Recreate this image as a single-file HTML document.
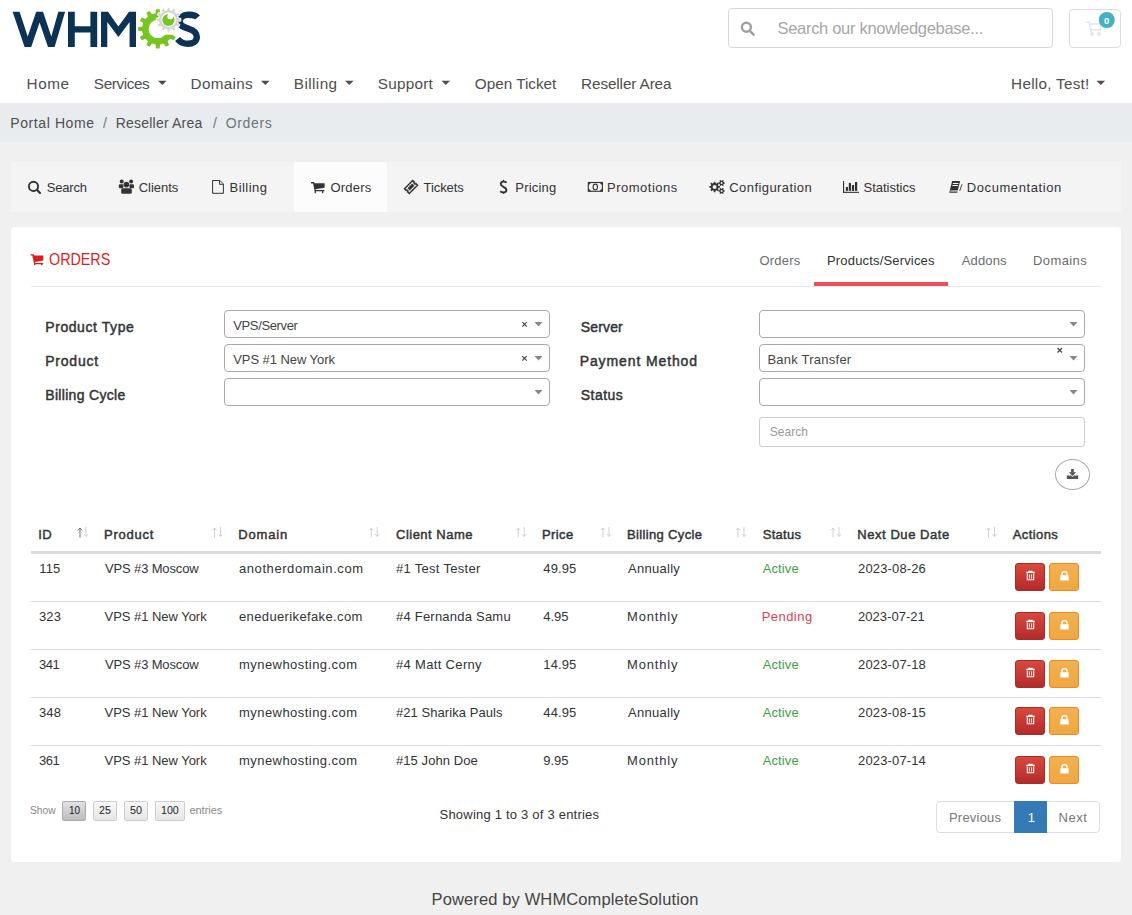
<!DOCTYPE html>
<html><head><meta charset="utf-8"><title>Orders</title>
<style>
html,body{margin:0;padding:0;}
body{width:1132px;height:915px;overflow:hidden;position:relative;background:#f0f0f0;font-family:"Liberation Sans",sans-serif;}
.b{position:absolute;box-sizing:border-box;}
.t{position:absolute;white-space:nowrap;font-family:"Liberation Sans",sans-serif;}
svg.ov{position:absolute;left:0;top:0;}
</style></head><body>
<!-- header -->
<div class="b" style="left:0;top:0;width:1132px;height:103px;background:#fff"></div>
<div class="b" style="left:0;top:103px;width:1132px;height:39px;background:#e9ecef"></div>
<div class="b" style="left:728px;top:8px;width:325px;height:40px;border:1px solid #d8d8d8;border-radius:4px;background:#fff"></div>
<div class="b" style="left:1069px;top:9px;width:52px;height:39px;border:1px solid #dcdcdc;border-radius:4px;background:#fff"></div>
<!-- tabs bar -->
<div class="b" style="left:11px;top:162px;width:1110px;height:50px;background:#f4f4f4"></div>
<div class="b" style="left:294px;top:162px;width:93px;height:50px;background:#fcfcfc"></div>
<!-- panel -->
<div class="b" style="left:11px;top:227px;width:1110px;height:635px;background:#fff;border-radius:4px"></div>
<div class="b" style="left:31px;top:286px;width:1070px;height:1px;background:#e8e8e8"></div>
<div class="b" style="left:814px;top:282px;width:134px;height:4px;background:#ee4e5a"></div>
<!-- selects -->
<div class="b" style="left:224px;top:310px;width:326px;height:28px;border:1px solid #aaa;border-radius:4px"></div>
<div class="b" style="left:224px;top:344px;width:326px;height:28px;border:1px solid #aaa;border-radius:4px"></div>
<div class="b" style="left:224px;top:378px;width:326px;height:28px;border:1px solid #aaa;border-radius:4px"></div>
<div class="b" style="left:759px;top:310px;width:326px;height:28px;border:1px solid #aaa;border-radius:4px"></div>
<div class="b" style="left:759px;top:344px;width:326px;height:28px;border:1px solid #aaa;border-radius:4px"></div>
<div class="b" style="left:759px;top:378px;width:326px;height:28px;border:1px solid #aaa;border-radius:4px"></div>
<div class="b" style="left:759px;top:417px;width:326px;height:30px;border:1px solid #ccc;border-radius:3px"></div>
<div class="b" style="left:1055px;top:459px;width:35px;height:31px;border:1px solid #a8a8a8;border-radius:50%"></div>
<!-- table -->
<div class="b" style="left:31px;top:551px;width:1070px;height:3px;background:#dcdcdc"></div>
<div class="b" style="left:31px;top:601px;width:1070px;height:1px;background:#ddd"></div>
<div class="b" style="left:31px;top:649px;width:1070px;height:1px;background:#ddd"></div>
<div class="b" style="left:31px;top:697px;width:1070px;height:1px;background:#ddd"></div>
<div class="b" style="left:31px;top:745px;width:1070px;height:1px;background:#ddd"></div>
<!-- action buttons -->
<div class="b btnd" style="left:1015px;top:563px"></div><div class="b btnl" style="left:1049px;top:563px"></div>
<div class="b btnd" style="left:1015px;top:612px"></div><div class="b btnl" style="left:1049px;top:612px"></div>
<div class="b btnd" style="left:1015px;top:660px"></div><div class="b btnl" style="left:1049px;top:660px"></div>
<div class="b btnd" style="left:1015px;top:707px"></div><div class="b btnl" style="left:1049px;top:707px"></div>
<div class="b btnd" style="left:1015px;top:756px"></div><div class="b btnl" style="left:1049px;top:756px"></div>
<style>
.btnd{width:30px;height:28px;border:1px solid #a82a2a;border-radius:3px;background:linear-gradient(#d9493c,#b22b2b);}
.btnl{width:30px;height:28px;border:1px solid #ec8a1c;border-radius:3px;background:linear-gradient(#f3b054,#efa73f);}
.pg{width:24px;height:20px;border:1px solid #ccc;border-radius:2px;background:linear-gradient(#f8f8f8,#e6e6e6);}
</style>
<!-- length buttons -->
<div class="b pg" style="left:62px;top:801px;border-color:#aaa;background:linear-gradient(#e2e2e2,#bdbdbd)"></div>
<div class="b pg" style="left:93px;top:801px"></div>
<div class="b pg" style="left:124px;top:801px"></div>
<div class="b pg" style="left:155px;top:801px;width:30px"></div>
<!-- pagination -->
<div class="b" style="left:936px;top:801px;width:164px;height:32px;border:1px solid #ddd;border-radius:4px"></div>
<div class="b" style="left:1014px;top:801px;width:33px;height:32px;background:#337ab7"></div>
<svg class="ov" width="1132" height="915" viewBox="0 0 1132 915">
<!-- logo -->
<g fill="#0d3354">
<path d="M12.6,11.7 L19.6,11.7 L27.7,36.5 L36.2,11.7 L43,11.7 L51.3,36.5 L58.3,11.7 L65.1,11.7 L54.6,47 L48,47 L39.6,22.5 L31.2,47 L24.6,47 Z"/>
<path d="M68,11.7 H74.8 V26.2 H90.4 V11.7 H97.2 V47 H90.4 V32.6 H74.8 V47 H68 Z"/>
<path d="M101,11.7 H108 L118.4,26.5 L129,11.7 H136 V47 H129.6 V22 L118.4,37 L107.3,22 V47 H101 Z"/>
</g>
<path d="M197.5,17.5 C195,14.5 191.5,14.8 188,14.8 C183,14.8 179.7,17.5 179.7,21.5 C179.7,26 184,27.3 188.5,28.7 C193,30 196.8,31.8 196.8,37 C196.8,41.5 192.5,43.8 188,43.8 C183.5,43.8 180,42 177.5,39" fill="none" stroke="#0d3354" stroke-width="6.4"/>
<path d="M173.44,26.63 L177.41,27.05 L177.41,30.75 L173.44,31.17 L172.48,34.75 L175.71,37.10 L173.86,40.31 L170.21,38.68 L167.58,41.31 L169.21,44.96 L166.00,46.81 L163.65,43.58 L160.07,44.54 L159.65,48.51 L155.95,48.51 L155.53,44.54 L151.95,43.58 L149.60,46.81 L146.39,44.96 L148.02,41.31 L145.39,38.68 L141.74,40.31 L139.89,37.10 L143.12,34.75 L142.16,31.17 L138.19,30.75 L138.19,27.05 L142.16,26.63 L143.12,23.05 L139.89,20.70 L141.74,17.49 L145.39,19.12 L148.02,16.49 L146.39,12.84 L149.60,10.99 L151.95,14.22 L155.53,13.26 L155.95,9.29 L159.65,9.29 L160.07,13.26 L163.65,14.22 L166.00,10.99 L169.21,12.84 L167.58,16.49 L170.21,19.12 L173.86,17.49 L175.71,20.70 L172.48,23.05Z" fill="#77c520"/>
<circle cx="157.8" cy="28.9" r="9.2" fill="#fff"/>
<rect x="157.8" y="17" width="20" height="17.7" fill="#fff"/>
<path d="M178.37,18.10 L180.91,18.21 L180.91,21.19 L178.37,21.30 L177.86,23.20 L180.01,24.56 L178.52,27.15 L176.26,25.97 L174.87,27.36 L176.05,29.62 L173.46,31.11 L172.10,28.96 L170.20,29.47 L170.09,32.01 L167.11,32.01 L167.00,29.47 L165.10,28.96 L163.74,31.11 L161.15,29.62 L162.33,27.36 L160.94,25.97 L158.68,27.15 L157.19,24.56 L159.34,23.20 L158.83,21.30 L156.29,21.19 L156.29,18.21 L158.83,18.10 L159.34,16.20 L157.19,14.84 L158.68,12.25 L160.94,13.43 L162.33,12.04 L161.15,9.78 L163.74,8.29 L165.10,10.44 L167.00,9.93 L167.11,7.39 L170.09,7.39 L170.20,9.93 L172.10,10.44 L173.46,8.29 L176.05,9.78 L174.87,12.04 L176.26,13.43 L178.52,12.25 L180.01,14.84 L177.86,16.20Z" fill="#d6d6d6" stroke="#fff" stroke-width="0.9"/>
<circle cx="168.6" cy="19.7" r="7.2" fill="#fff"/>
<circle cx="168.4" cy="20" r="6.1" fill="#77c520"/>
<circle cx="170.2" cy="16.4" r="2.9" fill="#fff"/>
<!-- header search icon -->
<circle cx="746.4" cy="27.3" r="4.5" fill="none" stroke="#a0a0a0" stroke-width="2.5"/>
<line x1="749.8" y1="30.8" x2="753.6" y2="34.6" stroke="#a0a0a0" stroke-width="2.6" stroke-linecap="round"/>
<!-- cart icon header -->
<g fill="none" stroke="#e2e2e2" stroke-width="1.3">
<path d="M1086.4,22.3 h2.8 l1.9,10.2 M1089.4,23.9 h11.6 l-0.6,6 h-9.8"/>
<circle cx="1092" cy="33.9" r="1.2"/><circle cx="1099.1" cy="33.9" r="1.2"/>
</g>
<circle cx="1106.8" cy="20" r="8" fill="#44b0c1"/>
<!-- nav carets -->
<g fill="#4e4e4e">
<path d="M158,80.8 h8.6 l-4.3,4.3z"/><path d="M261,80.8 h8.6 l-4.3,4.3z"/><path d="M345,80.8 h8.6 l-4.3,4.3z"/>
<path d="M441.5,80.8 h8.6 l-4.3,4.3z"/><path d="M1096.5,80.8 h8.6 l-4.3,4.3z"/>
</g>
<!-- tab icons -->
<g fill="#333" stroke="none">
<circle cx="33.5" cy="186.4" r="4.6" fill="none" stroke="#333" stroke-width="1.9"/>
<line x1="36.8" y1="189.8" x2="40" y2="193" stroke="#333" stroke-width="2.2" stroke-linecap="round"/>
<circle cx="121.7" cy="181.6" r="2"/><circle cx="131.1" cy="181.6" r="2"/><circle cx="126.4" cy="184.6" r="2.8"/>
<rect x="118.8" y="184.2" width="4.6" height="4" rx="1.2"/><rect x="129.4" y="184.2" width="4.6" height="4" rx="1.2"/>
<rect x="121.2" y="188.3" width="10.6" height="5.5" rx="1.5"/>
<path d="M212.6,180.5 h7.3 l3.5,3.5 v9.3 h-10.8z M219.5,181 v3.3 h3.4" fill="none" stroke="#333" stroke-width="1"/>
<path d="M311,182 h3 l0.6,1.2 h10 v4.6 l-9.1,1.4 l0.2,0.9 h8.6 v1.2 h-9.6 l-1.6,-7.9 h-2.1z"/>
<rect x="314.6" y="191" width="1.3" height="2.2"/><rect x="322" y="191" width="1.3" height="2.2"/>
<g transform="rotate(-45 411 187)"><path d="M405.2,183.6 h11.6 v2.3 a1.1,1.1 0 0 0 0,2.2 v2.3 h-11.6 v-2.3 a1.1,1.1 0 0 0 0,-2.2z" fill="none" stroke="#333" stroke-width="1.5"/><rect x="407.8" y="185.4" width="6.4" height="3.2"/></g>
<path d="M506.6,182.6 C505,181.2 500.8,181 500.8,184 C500.8,187.1 506.4,186.5 506.4,190 C506.4,192.8 502.2,193 500.2,191.2" fill="none" stroke="#333" stroke-width="1.9"/>
<line x1="503.5" y1="179.8" x2="503.5" y2="182" stroke="#333" stroke-width="1.3"/><line x1="503.5" y1="191.8" x2="503.5" y2="193.8" stroke="#333" stroke-width="1.3"/>
<rect x="588.3" y="182.5" width="14.1" height="8.8" fill="none" stroke="#333" stroke-width="1.1"/>
<path d="M588.3,182.5 h3 l-3,3z M602.4,182.5 h-3 l3,3z M588.3,191.3 h3 l-3,-3z M602.4,191.3 h-3 l3,-3z"/>
<ellipse cx="595.3" cy="186.9" rx="2.2" ry="2.8" fill="none" stroke="#333" stroke-width="1.1"/>
<path d="M718.51,186.04 L719.83,186.07 L719.83,187.73 L718.51,187.76 L717.97,189.06 L718.89,190.02 L717.72,191.19 L716.76,190.27 L715.46,190.81 L715.43,192.13 L713.77,192.13 L713.74,190.81 L712.44,190.27 L711.48,191.19 L710.31,190.02 L711.23,189.06 L710.69,187.76 L709.37,187.73 L709.37,186.07 L710.69,186.04 L711.23,184.74 L710.31,183.78 L711.48,182.61 L712.44,183.53 L713.74,182.99 L713.77,181.67 L715.43,181.67 L715.46,182.99 L716.76,183.53 L717.72,182.61 L718.89,183.78 L717.97,184.74Z M716.6,186.9 A2,2 0 1 0 712.6,186.9 A2,2 0 1 0 716.6,186.9Z" fill-rule="evenodd"/>
<path d="M723.81,182.35 L724.73,182.33 L724.73,183.67 L723.81,183.65 L723.27,184.58 L723.74,185.38 L722.59,186.04 L722.14,185.24 L721.06,185.24 L720.61,186.04 L719.46,185.38 L719.93,184.58 L719.39,183.65 L718.47,183.67 L718.47,182.33 L719.39,182.35 L719.93,181.42 L719.46,180.62 L720.61,179.96 L721.06,180.76 L722.14,180.76 L722.59,179.96 L723.74,180.62 L723.27,181.42Z M722.6,183 A1,1 0 1 0 720.6,183 A1,1 0 1 0 722.6,183Z" fill-rule="evenodd"/>
<path d="M723.81,190.25 L724.73,190.23 L724.73,191.57 L723.81,191.55 L723.27,192.48 L723.74,193.28 L722.59,193.94 L722.14,193.14 L721.06,193.14 L720.61,193.94 L719.46,193.28 L719.93,192.48 L719.39,191.55 L718.47,191.57 L718.47,190.23 L719.39,190.25 L719.93,189.32 L719.46,188.52 L720.61,187.86 L721.06,188.66 L722.14,188.66 L722.59,187.86 L723.74,188.52 L723.27,189.32Z M722.6,190.9 A1,1 0 1 0 720.6,190.9 A1,1 0 1 0 722.6,190.9Z" fill-rule="evenodd"/>
<rect x="843" y="181" width="1.1" height="12"/><rect x="843" y="191.8" width="16" height="1.1"/>
<rect x="845.8" y="187" width="2.2" height="3.9"/><rect x="848.8" y="183" width="2.2" height="7.9"/>
<rect x="851.9" y="185" width="2.2" height="5.9"/><rect x="855" y="182" width="2.2" height="8.9"/>
<path d="M952.1,181 h8 l-2.85,11.8 h-8z"/>
<path d="M950.5,190.6 h8 l-0.25,1 h-8z" fill="#fff"/>
<path d="M953.1,183.1 h5.4 l-0.22,0.9 h-5.4z M952.6,185.1 h5.4 l-0.22,0.9 h-5.4z" fill="#fff"/>
<path d="M962,184.2 L959.8,190.8" stroke="#333" stroke-width="0.9" fill="none"/>
</g>
<!-- orders header cart -->
<g fill="#dd1c1a">
<path d="M30.5,254.2 h3.2 l0.7,1.4 h8.9 v5 l-8.4,1.3 l0.3,1 h8 v1.3 h-9 l-1.9,-8.8 h-1.8z"/>
<rect x="34" y="263.6" width="1.4" height="1.5"/><rect x="41" y="263.6" width="1.4" height="1.5"/>
</g>
<!-- select clear + carets -->
<g fill="#888">
<path d="M534.5,322 h8 l-4,4.5z"/><path d="M534.5,356 h8 l-4,4.5z"/><path d="M534.5,390 h8 l-4,4.5z"/>
<path d="M1069.5,322 h8 l-4,4.5z"/><path d="M1069.5,356 h8 l-4,4.5z"/><path d="M1069.5,390 h8 l-4,4.5z"/>
</g>
<g stroke="#444" stroke-width="1.2">
<path d="M522.3,322.2 l4.4,4.4 M526.7,322.2 l-4.4,4.4"/>
<path d="M522.3,356.2 l4.4,4.4 M526.7,356.2 l-4.4,4.4"/>
<path d="M1057.5,348 l4.5,4.5 M1062,348 l-4.5,4.5"/>
</g>
<!-- download icon -->
<g fill="#555">
<path d="M1066.8,475.6 h4.2 l1.5,1.4 l1.5,-1.4 h4.2 v3.3 h-11.4z"/>
<rect x="1071.1" y="469" width="2.7" height="3.6"/>
<path d="M1068.8,472.3 h7.4 l-3.7,3.6z"/>
</g>
<!-- sort icons -->
<g stroke-width="0.95" fill="none">
<path d="M80,537.5 V528 M78,530.3 L80,528 L82,530.3" stroke="#666"/>
<path d="M86,527 V536.5 M84,534.2 L86,536.5 L88,534.2" stroke="#cfcfcf"/>
<path d="M214.5,537.5 V528 M212.5,530.3 L214.5,528 L216.5,530.3" stroke="#cfcfcf"/>
<path d="M220.5,527 V536.5 M218.5,534.2 L220.5,536.5 L222.5,534.2" stroke="#cfcfcf"/>
<path d="M371.25,537.5 V528 M369.25,530.3 L371.25,528 L373.25,530.3" stroke="#cfcfcf"/>
<path d="M377.25,527 V536.5 M375.25,534.2 L377.25,536.5 L379.25,534.2" stroke="#cfcfcf"/>
<path d="M518.25,537.5 V528 M516.25,530.3 L518.25,528 L520.25,530.3" stroke="#cfcfcf"/>
<path d="M524.25,527 V536.5 M522.25,534.2 L524.25,536.5 L526.25,534.2" stroke="#cfcfcf"/>
<path d="M603,537.5 V528 M601,530.3 L603,528 L605,530.3" stroke="#cfcfcf"/>
<path d="M609,527 V536.5 M607,534.2 L609,536.5 L611,534.2" stroke="#cfcfcf"/>
<path d="M738,537.5 V528 M736,530.3 L738,528 L740,530.3" stroke="#cfcfcf"/>
<path d="M744,527 V536.5 M742,534.2 L744,536.5 L746,534.2" stroke="#cfcfcf"/>
<path d="M833,537.5 V528 M831,530.3 L833,528 L835,530.3" stroke="#cfcfcf"/>
<path d="M839,527 V536.5 M837,534.2 L839,536.5 L841,534.2" stroke="#cfcfcf"/>
<path d="M988.5,537.5 V528 M986.5,530.3 L988.5,528 L990.5,530.3" stroke="#cfcfcf"/>
<path d="M994.5,527 V536.5 M992.5,534.2 L994.5,536.5 L996.5,534.2" stroke="#cfcfcf"/>
</g>
<!-- action icons -->
<g fill="#fff">
<path d="M1026.3,572.4 h8.4 M1028.9,572.2 v-1 h3.2 v1" fill="none" stroke="#fff" stroke-width="1.1"/>
<path d="M1027.3,573.2 v6.6 h6.4 v-6.6" fill="none" stroke="#fff" stroke-width="1.1"/>
<path d="M1029.4,574.1 v4.6 M1031.6,574.1 v4.6" fill="none" stroke="#fff" stroke-width="0.8"/>
<rect x="1060.3" y="575.3" width="8.4" height="5.2" rx="0.6"/><path d="M1061.9,575.8 v-1.6 a2.6,2.6 0 0 1 5.2,0 v1.6" fill="none" stroke="#fff" stroke-width="1.3"/>
<path d="M1026.3,621.4 h8.4 M1028.9,621.2 v-1 h3.2 v1" fill="none" stroke="#fff" stroke-width="1.1"/>
<path d="M1027.3,622.2 v6.6 h6.4 v-6.6" fill="none" stroke="#fff" stroke-width="1.1"/>
<path d="M1029.4,623.1 v4.6 M1031.6,623.1 v4.6" fill="none" stroke="#fff" stroke-width="0.8"/>
<rect x="1060.3" y="624.3" width="8.4" height="5.2" rx="0.6"/><path d="M1061.9,624.8 v-1.6 a2.6,2.6 0 0 1 5.2,0 v1.6" fill="none" stroke="#fff" stroke-width="1.3"/>
<path d="M1026.3,669.4 h8.4 M1028.9,669.2 v-1 h3.2 v1" fill="none" stroke="#fff" stroke-width="1.1"/>
<path d="M1027.3,670.2 v6.6 h6.4 v-6.6" fill="none" stroke="#fff" stroke-width="1.1"/>
<path d="M1029.4,671.1 v4.6 M1031.6,671.1 v4.6" fill="none" stroke="#fff" stroke-width="0.8"/>
<rect x="1060.3" y="672.3" width="8.4" height="5.2" rx="0.6"/><path d="M1061.9,672.8 v-1.6 a2.6,2.6 0 0 1 5.2,0 v1.6" fill="none" stroke="#fff" stroke-width="1.3"/>
<path d="M1026.3,716.4 h8.4 M1028.9,716.2 v-1 h3.2 v1" fill="none" stroke="#fff" stroke-width="1.1"/>
<path d="M1027.3,717.2 v6.6 h6.4 v-6.6" fill="none" stroke="#fff" stroke-width="1.1"/>
<path d="M1029.4,718.1 v4.6 M1031.6,718.1 v4.6" fill="none" stroke="#fff" stroke-width="0.8"/>
<rect x="1060.3" y="719.3" width="8.4" height="5.2" rx="0.6"/><path d="M1061.9,719.8 v-1.6 a2.6,2.6 0 0 1 5.2,0 v1.6" fill="none" stroke="#fff" stroke-width="1.3"/>
<path d="M1026.3,765.4 h8.4 M1028.9,765.2 v-1 h3.2 v1" fill="none" stroke="#fff" stroke-width="1.1"/>
<path d="M1027.3,766.2 v6.6 h6.4 v-6.6" fill="none" stroke="#fff" stroke-width="1.1"/>
<path d="M1029.4,767.1 v4.6 M1031.6,767.1 v4.6" fill="none" stroke="#fff" stroke-width="0.8"/>
<rect x="1060.3" y="768.3" width="8.4" height="5.2" rx="0.6"/><path d="M1061.9,768.8 v-1.6 a2.6,2.6 0 0 1 5.2,0 v1.6" fill="none" stroke="#fff" stroke-width="1.3"/>
</g>
</svg>
<span class="t" style="left:26.60px;top:75.65px;font-size:15.3px;line-height:15.3px;color:#4e4e4e;letter-spacing:0.568px">Home</span>
<span class="t" style="left:93.85px;top:75.65px;font-size:15.3px;line-height:15.3px;color:#4e4e4e;letter-spacing:-0.394px">Services</span>
<span class="t" style="left:190.60px;top:75.65px;font-size:15.3px;line-height:15.3px;color:#4e4e4e;letter-spacing:0.298px">Domains</span>
<span class="t" style="left:293.85px;top:75.65px;font-size:15.3px;line-height:15.3px;color:#4e4e4e;letter-spacing:0.408px">Billing</span>
<span class="t" style="left:377.85px;top:75.65px;font-size:15.3px;line-height:15.3px;color:#4e4e4e;letter-spacing:0.237px">Support</span>
<span class="t" style="left:474.85px;top:75.65px;font-size:15.3px;line-height:15.3px;color:#4e4e4e;letter-spacing:-0.015px">Open Ticket</span>
<span class="t" style="left:581.10px;top:75.65px;font-size:15.3px;line-height:15.3px;color:#4e4e4e;letter-spacing:-0.118px">Reseller Area</span>
<span class="t" style="left:1011.10px;top:75.65px;font-size:15.3px;line-height:15.3px;color:#4e4e4e;letter-spacing:0.258px">Hello, Test!</span>
<span class="t" style="left:10.25px;top:116.15px;font-size:14px;line-height:14px;color:#4e4e4e;letter-spacing:0.598px">Portal Home</span>
<span class="t" style="left:103.00px;top:116.15px;font-size:14px;line-height:14px;color:#6c757d">/</span>
<span class="t" style="left:115.75px;top:116.15px;font-size:14px;line-height:14px;color:#4e4e4e;letter-spacing:0.206px">Reseller Area</span>
<span class="t" style="left:213.00px;top:116.15px;font-size:14px;line-height:14px;color:#6c757d">/</span>
<span class="t" style="left:225.75px;top:116.15px;font-size:14px;line-height:14px;color:#6c757d;letter-spacing:0.643px">Orders</span>
<span class="t" style="left:46.75px;top:180.99px;font-size:13px;line-height:13px;color:#333;letter-spacing:-0.192px">Search</span>
<span class="t" style="left:138.75px;top:180.99px;font-size:13px;line-height:13px;color:#333;letter-spacing:-0.039px">Clients</span>
<span class="t" style="left:229.50px;top:180.99px;font-size:13px;line-height:13px;color:#333;letter-spacing:0.466px">Billing</span>
<span class="t" style="left:330.50px;top:180.99px;font-size:13px;line-height:13px;color:#333;letter-spacing:0.204px">Orders</span>
<span class="t" style="left:423.50px;top:180.99px;font-size:13px;line-height:13px;color:#333;letter-spacing:-0.073px">Tickets</span>
<span class="t" style="left:515.25px;top:180.99px;font-size:13px;line-height:13px;color:#333;letter-spacing:0.207px">Pricing</span>
<span class="t" style="left:607.00px;top:180.99px;font-size:13px;line-height:13px;color:#333;letter-spacing:0.500px">Promotions</span>
<span class="t" style="left:729.25px;top:180.99px;font-size:13px;line-height:13px;color:#333;letter-spacing:0.429px">Configuration</span>
<span class="t" style="left:863.50px;top:180.99px;font-size:13px;line-height:13px;color:#333">Statistics</span>
<span class="t" style="left:966.75px;top:180.99px;font-size:13px;line-height:13px;color:#333;letter-spacing:0.587px">Documentation</span>
<span class="t" style="left:48.75px;top:250.93px;font-size:16.5px;line-height:16.5px;color:#dd1c1a;transform:scaleX(0.8677);transform-origin:0 0">ORDERS</span>
<span class="t" style="left:759.50px;top:253.99px;font-size:13px;line-height:13px;color:#6c6c6c;letter-spacing:0.204px">Orders</span>
<span class="t" style="left:827.00px;top:253.99px;font-size:13px;line-height:13px;color:#333;letter-spacing:0.171px">Products/Services</span>
<span class="t" style="left:961.75px;top:253.99px;font-size:13px;line-height:13px;color:#6c6c6c;letter-spacing:0.132px">Addons</span>
<span class="t" style="left:1033.00px;top:253.99px;font-size:13px;line-height:13px;color:#6c6c6c;letter-spacing:0.409px">Domains</span>
<span class="t" style="left:45.25px;top:320.15px;font-size:14px;line-height:14px;color:#333;letter-spacing:0.572px;-webkit-text-stroke:0.45px #333">Product Type</span>
<span class="t" style="left:45.25px;top:354.15px;font-size:14px;line-height:14px;color:#333;letter-spacing:0.774px;-webkit-text-stroke:0.45px #333">Product</span>
<span class="t" style="left:45.25px;top:388.15px;font-size:14px;line-height:14px;color:#333;letter-spacing:0.316px;-webkit-text-stroke:0.45px #333">Billing Cycle</span>
<span class="t" style="left:580.70px;top:320.15px;font-size:14px;line-height:14px;color:#333;letter-spacing:0.166px;-webkit-text-stroke:0.45px #333">Server</span>
<span class="t" style="left:579.70px;top:354.15px;font-size:14px;line-height:14px;color:#333;letter-spacing:0.889px;-webkit-text-stroke:0.45px #333">Payment Method</span>
<span class="t" style="left:580.70px;top:388.15px;font-size:14px;line-height:14px;color:#333;letter-spacing:0.482px;-webkit-text-stroke:0.45px #333">Status</span>
<span class="t" style="left:233.20px;top:319.19px;font-size:13px;line-height:13px;color:#444;letter-spacing:-0.354px">VPS/Server</span>
<span class="t" style="left:233.20px;top:353.19px;font-size:13px;line-height:13px;color:#444;letter-spacing:-0.061px">VPS #1 New York</span>
<span class="t" style="left:767.40px;top:353.19px;font-size:13px;line-height:13px;color:#444;letter-spacing:0.239px">Bank Transfer</span>
<span class="t" style="left:769.80px;top:426.24px;font-size:12px;line-height:12px;color:#999;letter-spacing:0.030px">Search</span>
<span class="t" style="left:38.25px;top:528.24px;font-size:13px;line-height:13px;color:#333;letter-spacing:0.388px;-webkit-text-stroke:0.45px #333">ID</span>
<span class="t" style="left:104.00px;top:528.24px;font-size:13px;line-height:13px;color:#333;letter-spacing:0.760px;-webkit-text-stroke:0.45px #333">Product</span>
<span class="t" style="left:238.25px;top:528.24px;font-size:13px;line-height:13px;color:#333;letter-spacing:0.837px;-webkit-text-stroke:0.45px #333">Domain</span>
<span class="t" style="left:396.00px;top:528.24px;font-size:13px;line-height:13px;color:#333;letter-spacing:0.495px;-webkit-text-stroke:0.45px #333">Client Name</span>
<span class="t" style="left:542.00px;top:528.24px;font-size:13px;line-height:13px;color:#333;letter-spacing:0.403px;-webkit-text-stroke:0.45px #333">Price</span>
<span class="t" style="left:627.00px;top:528.24px;font-size:13px;line-height:13px;color:#333;letter-spacing:0.348px;-webkit-text-stroke:0.45px #333">Billing Cycle</span>
<span class="t" style="left:762.75px;top:528.24px;font-size:13px;line-height:13px;color:#333;letter-spacing:0.279px;-webkit-text-stroke:0.45px #333">Status</span>
<span class="t" style="left:857.25px;top:528.24px;font-size:13px;line-height:13px;color:#333;letter-spacing:0.560px;-webkit-text-stroke:0.45px #333">Next Due Date</span>
<span class="t" style="left:1012.75px;top:528.24px;font-size:13px;line-height:13px;color:#333;letter-spacing:0.395px;-webkit-text-stroke:0.45px #333">Actions</span>
<span class="t" style="left:39.25px;top:562.24px;font-size:13px;line-height:13px;color:#333;letter-spacing:0.127px">115</span>
<span class="t" style="left:105.00px;top:562.24px;font-size:13px;line-height:13px;color:#333;letter-spacing:-0.145px">VPS #3 Moscow</span>
<span class="t" style="left:239.00px;top:562.24px;font-size:13px;line-height:13px;color:#333;letter-spacing:0.571px">anotherdomain.com</span>
<span class="t" style="left:396.00px;top:562.24px;font-size:13px;line-height:13px;color:#333;letter-spacing:0.293px">#1 Test Tester</span>
<span class="t" style="left:543.30px;top:562.24px;font-size:13px;line-height:13px;color:#333;letter-spacing:0.125px">49.95</span>
<span class="t" style="left:628.00px;top:562.24px;font-size:13px;line-height:13px;color:#333;letter-spacing:0.276px">Annually</span>
<span class="t" style="left:762.70px;top:562.24px;font-size:13px;line-height:13px;color:#3e9f3e;letter-spacing:0.106px">Active</span>
<span class="t" style="left:858.10px;top:562.24px;font-size:13px;line-height:13px;color:#333;letter-spacing:0.137px">2023-08-26</span>
<span class="t" style="left:38.90px;top:610.24px;font-size:13px;line-height:13px;color:#333;letter-spacing:0.220px">323</span>
<span class="t" style="left:104.60px;top:610.24px;font-size:13px;line-height:13px;color:#333;letter-spacing:-0.039px">VPS #1 New York</span>
<span class="t" style="left:239.00px;top:610.24px;font-size:13px;line-height:13px;color:#333;letter-spacing:0.368px">eneduerikefake.com</span>
<span class="t" style="left:396.00px;top:610.24px;font-size:13px;line-height:13px;color:#333;letter-spacing:0.222px">#4 Fernanda Samu</span>
<span class="t" style="left:543.30px;top:610.24px;font-size:13px;line-height:13px;color:#333;letter-spacing:-0.024px">4.95</span>
<span class="t" style="left:627.00px;top:610.24px;font-size:13px;line-height:13px;color:#333;letter-spacing:0.813px">Monthly</span>
<span class="t" style="left:761.70px;top:610.24px;font-size:13px;line-height:13px;color:#e0424e;letter-spacing:0.453px">Pending</span>
<span class="t" style="left:858.10px;top:610.24px;font-size:13px;line-height:13px;color:#333;letter-spacing:0.026px">2023-07-21</span>
<span class="t" style="left:38.90px;top:658.24px;font-size:13px;line-height:13px;color:#333;letter-spacing:-0.480px">341</span>
<span class="t" style="left:105.00px;top:658.24px;font-size:13px;line-height:13px;color:#333;letter-spacing:-0.145px">VPS #3 Moscow</span>
<span class="t" style="left:239.00px;top:658.24px;font-size:13px;line-height:13px;color:#333;letter-spacing:0.451px">mynewhosting.com</span>
<span class="t" style="left:396.00px;top:658.24px;font-size:13px;line-height:13px;color:#333;letter-spacing:0.330px">#4 Matt Cerny</span>
<span class="t" style="left:543.30px;top:658.24px;font-size:13px;line-height:13px;color:#333;letter-spacing:0.125px">14.95</span>
<span class="t" style="left:627.00px;top:658.24px;font-size:13px;line-height:13px;color:#333;letter-spacing:0.813px">Monthly</span>
<span class="t" style="left:762.70px;top:658.24px;font-size:13px;line-height:13px;color:#3e9f3e;letter-spacing:0.106px">Active</span>
<span class="t" style="left:858.10px;top:658.24px;font-size:13px;line-height:13px;color:#333;letter-spacing:0.137px">2023-07-18</span>
<span class="t" style="left:38.90px;top:706.24px;font-size:13px;line-height:13px;color:#333;letter-spacing:0.220px">348</span>
<span class="t" style="left:104.60px;top:706.24px;font-size:13px;line-height:13px;color:#333;letter-spacing:-0.039px">VPS #1 New York</span>
<span class="t" style="left:239.00px;top:706.24px;font-size:13px;line-height:13px;color:#333;letter-spacing:0.451px">mynewhosting.com</span>
<span class="t" style="left:396.00px;top:706.24px;font-size:13px;line-height:13px;color:#333;letter-spacing:0.062px">#21 Sharika Pauls</span>
<span class="t" style="left:543.30px;top:706.24px;font-size:13px;line-height:13px;color:#333;letter-spacing:0.125px">44.95</span>
<span class="t" style="left:628.00px;top:706.24px;font-size:13px;line-height:13px;color:#333;letter-spacing:0.276px">Annually</span>
<span class="t" style="left:762.70px;top:706.24px;font-size:13px;line-height:13px;color:#3e9f3e;letter-spacing:0.106px">Active</span>
<span class="t" style="left:858.10px;top:706.24px;font-size:13px;line-height:13px;color:#333;letter-spacing:0.137px">2023-08-15</span>
<span class="t" style="left:38.90px;top:754.24px;font-size:13px;line-height:13px;color:#333;letter-spacing:-0.480px">361</span>
<span class="t" style="left:104.60px;top:754.24px;font-size:13px;line-height:13px;color:#333;letter-spacing:-0.039px">VPS #1 New York</span>
<span class="t" style="left:239.00px;top:754.24px;font-size:13px;line-height:13px;color:#333;letter-spacing:0.451px">mynewhosting.com</span>
<span class="t" style="left:396.00px;top:754.24px;font-size:13px;line-height:13px;color:#333;letter-spacing:0.071px">#15 John Doe</span>
<span class="t" style="left:543.30px;top:754.24px;font-size:13px;line-height:13px;color:#333;letter-spacing:-0.024px">9.95</span>
<span class="t" style="left:627.00px;top:754.24px;font-size:13px;line-height:13px;color:#333;letter-spacing:0.813px">Monthly</span>
<span class="t" style="left:762.70px;top:754.24px;font-size:13px;line-height:13px;color:#3e9f3e;letter-spacing:0.106px">Active</span>
<span class="t" style="left:858.10px;top:754.24px;font-size:13px;line-height:13px;color:#333;letter-spacing:0.137px">2023-07-14</span>
<span class="t" style="left:439.50px;top:808.49px;font-size:13px;line-height:13px;color:#333;letter-spacing:0.214px">Showing 1 to 3 of 3 entries</span>
<span class="t" style="left:949.00px;top:811.09px;font-size:13px;line-height:13px;color:#777;letter-spacing:0.203px">Previous</span>
<span class="t" style="left:1027.70px;top:811.09px;font-size:13px;line-height:13px;color:#fff">1</span>
<span class="t" style="left:1058.50px;top:811.09px;font-size:13px;line-height:13px;color:#777;letter-spacing:0.527px">Next</span>
<span class="t" style="left:30.40px;top:805.09px;font-size:11px;line-height:11px;color:#888;transform:scaleX(0.9321);transform-origin:0 0">Show</span>
<span class="t" style="left:189.40px;top:805.09px;font-size:11px;line-height:11px;color:#888;letter-spacing:-0.019px">entries</span>
<span class="t" style="left:68.50px;top:805.16px;font-size:11.5px;line-height:11.5px;color:#222;transform:scaleX(0.8713);transform-origin:0 0">10</span>
<span class="t" style="left:99.20px;top:805.16px;font-size:11.5px;line-height:11.5px;color:#222;transform:scaleX(0.9277);transform-origin:0 0">25</span>
<span class="t" style="left:129.70px;top:805.16px;font-size:11.5px;line-height:11.5px;color:#222;transform:scaleX(0.9439);transform-origin:0 0">50</span>
<span class="t" style="left:161.20px;top:805.16px;font-size:11.5px;line-height:11.5px;color:#222;transform:scaleX(0.9260);transform-origin:0 0">100</span>
<span class="t" style="left:431.50px;top:891.43px;font-size:16.5px;line-height:16.5px;color:#444;letter-spacing:0.130px">Powered by WHMCompleteSolution</span>
<span class="t" style="left:777.50px;top:20.03px;font-size:16.5px;line-height:16.5px;color:#a6a6a6;letter-spacing:-0.305px">Search our knowledgebase...</span>
<span class="t" style="left:1104.00px;top:15.86px;font-size:9.5px;line-height:9.5px;color:#fff;font-weight:700">0</span>
</body></html>
